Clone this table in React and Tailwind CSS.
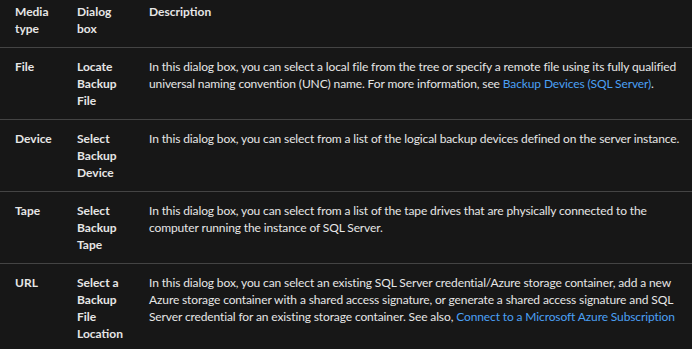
const rows = [
  {
    media: 'File',
    dialog: ['Locate', 'Backup', 'File'],
    desc: (
      <>
        In this dialog box, you can select a local file from the tree or specify a remote file using its fully qualified
        universal naming convention (UNC) name. For more information, see{' '}
        <a href="#" className="text-[#4ba0f5]">Backup Devices (SQL Server)</a>.
      </>
    ),
  },
  {
    media: 'Device',
    dialog: ['Select', 'Backup', 'Device'],
    desc: <>In this dialog box, you can select from a list of the logical backup devices defined on the server instance.</>,
  },
  {
    media: 'Tape',
    dialog: ['Select', 'Backup', 'Tape'],
    desc: (
      <>
        In this dialog box, you can select from a list of the tape drives that are physically connected to the computer
        running the instance of SQL Server.
      </>
    ),
  },
  {
    media: 'URL',
    dialog: ['Select a', 'Backup', 'File', 'Location'],
    desc: (
      <>
        In this dialog box, you can select an existing SQL Server credential/Azure storage container, add a new Azure
        storage container with a shared access signature, or generate a shared access signature and SQL Server credential
        for an existing storage container. See also,{' '}
        <a href="#" className="text-[#4ba0f5]">Connect to a Microsoft Azure Subscription</a>
      </>
    ),
  },
];

export default function App() {
  return (
    <div className="h-[349px] overflow-hidden bg-[#171717] text-[#e6e6e6] [font-family:Lato,sans-serif] text-[12px] leading-[17px]">
      <table className="w-full table-fixed border-collapse">
        <colgroup>
          <col className="w-[62px]" />
          <col className="w-[72px]" />
          <col />
        </colgroup>
        <thead>
          <tr className="border-b border-[#444444] text-left align-top font-bold">
            <th className="pl-[15px] pt-[3px] pb-[10px]">Media<br />type</th>
            <th className="pl-[15px] pt-[3px] pb-[10px]">Dialog<br />box</th>
            <th className="pl-[15px] pt-[3px] pb-[10px]">Description</th>
          </tr>
        </thead>
        <tbody>
          {rows.map((r) => (
            <tr key={r.media} className="border-b border-[#444444] align-top">
              <td className="pl-[15px] py-[10px] font-bold">{r.media}</td>
              <td className="pl-[15px] py-[10px] font-bold">
                {r.dialog.map((d) => (
                  <div key={d}>{d}</div>
                ))}
              </td>
              <td className="pl-[15px] pr-[2px] py-[10px] tracking-[-0.12px]">{r.desc}</td>
            </tr>
          ))}
        </tbody>
      </table>
    </div>
  );
}
